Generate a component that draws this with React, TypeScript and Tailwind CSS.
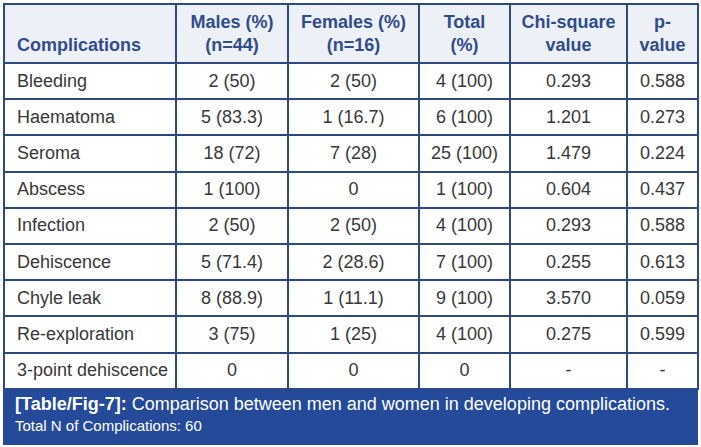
import React from 'react';

const rows = [
  ['Bleeding', '2 (50)', '2 (50)', '4 (100)', '0.293', '0.588'],
  ['Haematoma', '5 (83.3)', '1 (16.7)', '6 (100)', '1.201', '0.273'],
  ['Seroma', '18 (72)', '7 (28)', '25 (100)', '1.479', '0.224'],
  ['Abscess', '1 (100)', '0', '1 (100)', '0.604', '0.437'],
  ['Infection', '2 (50)', '2 (50)', '4 (100)', '0.293', '0.588'],
  ['Dehiscence', '5 (71.4)', '2 (28.6)', '7 (100)', '0.255', '0.613'],
  ['Chyle leak', '8 (88.9)', '1 (11.1)', '9 (100)', '3.570', '0.059'],
  ['Re-exploration', '3 (75)', '1 (25)', '4 (100)', '0.275', '0.599'],
  ['3-point dehiscence', '0', '0', '0', '-', '-'],
];

const widths = ['w-[172px]', 'w-[112px]', 'w-[131px]', 'w-[91px]', 'w-[117px]', 'w-[71px]'];

export default function App() {
  return (
    <div className="w-[701px] h-[447px] bg-white pt-[3px] pl-[3px]" style={{ fontFamily: '"Liberation Sans", Arial, sans-serif' }}>
      <div className="w-[695px]">
        <table className="border-collapse table-fixed w-full text-[18px]">
          <colgroup>
            {widths.map((w, i) => (
              <col key={i} className={w} />
            ))}
          </colgroup>
          <thead>
            <tr className="h-[59px] bg-[#eef0f8] text-[#2f4c8c] leading-[23px] font-bold">
              <th className="border-2 border-[#2c4a7e] text-left align-bottom pl-3 pb-[5px]">Complications</th>
              <th className="border-2 border-[#2c4a7e] align-bottom pb-[5px]">Males (%)<br />(n=44)</th>
              <th className="border-2 border-[#2c4a7e] align-bottom pb-[5px]">Females (%)<br />(n=16)</th>
              <th className="border-2 border-[#2c4a7e] align-bottom pb-[5px]">Total<br />(%)</th>
              <th className="border-2 border-[#2c4a7e] align-bottom pb-[5px]">Chi-square<br />value</th>
              <th className="border-2 border-[#2c4a7e] align-bottom pb-[5px]">p-<br />value</th>
            </tr>
          </thead>
          <tbody className="text-[#383838]">
            {rows.map((r) => (
              <tr key={r[0]} className="h-[36.2px]">
                {r.map((c, i) => (
                  <td
                    key={i}
                    className={
                      'border-2 border-[#2c4a7e] p-0 ' + (i === 0 ? 'text-left pl-3' : 'text-center')
                    }
                  >
                    {c}
                  </td>
                ))}
              </tr>
            ))}
          </tbody>
        </table>
        <div className="bg-[#254a9a] text-white h-[56px] -mt-px pl-3 pt-[3px]">
          <p className="text-[18px] leading-[24px]">
            <span className="font-bold">[Table/Fig-7]:</span> Comparison between men and women in developing complications.
          </p>
          <p className="text-[15px] leading-[20px]">Total N of Complications: 60</p>
        </div>
      </div>
    </div>
  );
}
